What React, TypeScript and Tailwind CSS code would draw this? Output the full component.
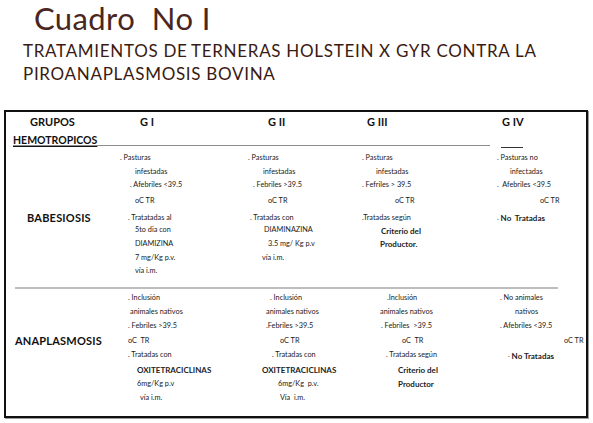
import type { ReactNode } from "react";

type Cell = { pl: number; text: ReactNode };

// one body line per row; each entry is [GI, GII, GIII, GIV]
const BABESIOSIS: { h: number; cells: (Cell | null)[] }[] = [
  { h: 13, cells: [{ pl: 0, text: ". Pasturas" }, { pl: 0, text: ". Pasturas" }, { pl: 0, text: ". Pasturas" }, { pl: 0, text: ". Pasturas no" }] },
  { h: 14, cells: [{ pl: 15, text: "infestadas" }, { pl: 15, text: "infestadas" }, { pl: 14, text: "infestadas" }, { pl: 13, text: "infectadas" }] },
  { h: 13, cells: [{ pl: 10, text: ". Afebriles <39.5" }, { pl: 5, text: ". Febriles >39.5" }, { pl: 0, text: ". Fefriles > 39.5" }, { pl: 0, text: ".  Afebriles <39.5" }] },
  { h: 18, cells: [{ pl: 15, text: "oC TR" }, { pl: 20, text: "oC TR" }, { pl: 33, text: "oC TR" }, { pl: 43, text: "oC TR" }] },
  { h: 14, cells: [{ pl: 8, text: ". Tratatadas al" }, { pl: 2, text: ". Tratadas con" }, { pl: 0, text: ".Tratadas según" }, { pl: 0, text: <>. <b className="text-[8px]">No&nbsp; Tratadas</b></> }] },
  { h: 13, cells: [{ pl: 15, text: "5to dia con" }, { pl: 16, text: "DIAMINAZINA" }, { pl: 19, text: <b className="text-[8px]">Criterio del</b> }, null] },
  { h: 14, cells: [{ pl: 15, text: "DIAMIZINA" }, { pl: 20, text: "3.5 mg/ Kg p.v" }, { pl: 18, text: <b className="text-[8px]">Productor.</b> }, null] },
  { h: 14, cells: [{ pl: 15, text: "7 mg/Kg p.v." }, { pl: 14, text: "vía i.m." }, null, null] },
  { h: 13, cells: [{ pl: 15, text: "vía i.m." }, null, null, null] },
];

const ANAPLASMOSIS: { h: number; cells: (Cell | null)[] }[] = [
  { h: 13, cells: [{ pl: 8, text: ". Inclusión" }, { pl: 22, text: ". Inclusión" }, { pl: 25, text: ".Inclusión" }, { pl: 3, text: ". No animales" }] },
  { h: 14, cells: [{ pl: 10, text: "animales nativos" }, { pl: 18, text: "animales nativos" }, { pl: 18, text: "animales nativos" }, { pl: 18, text: "nativos" }] },
  { h: 14, cells: [{ pl: 8, text: ". Febriles >39.5" }, { pl: 18, text: ".Febriles >39.5" }, { pl: 19, text: ". Febriles  >39.5" }, { pl: 3, text: ". Afebriles <39.5" }] },
  { h: 15, cells: [{ pl: 8, text: "oC  TR" }, { pl: 32, text: "oC TR" }, { pl: 40, text: "oC  TR" }, { pl: 67, text: "oC TR" }] },
  { h: 15, cells: [{ pl: 8, text: ". Tratadas con" }, { pl: 24, text: ". Tratadas con" }, { pl: 24, text: ". Tratadas según" }, { pl: 11, text: <>. <b className="text-[8px]">No Tratadas</b></> }] },
  { h: 14, cells: [{ pl: 17, text: <b className="text-[8px]">OXITETRACICLINAS</b> }, { pl: 14, text: <b className="text-[8px]">OXITETRACICLINAS</b> }, { pl: 36, text: <b className="text-[8px]">Criterio del</b> }, null] },
  { h: 14, cells: [{ pl: 17, text: "6mg/Kg p.v" }, { pl: 30, text: "6mg/Kg  p.v." }, { pl: 36, text: <b className="text-[8px]">Productor</b> }, null] },
  { h: 14, cells: [{ pl: 20, text: "vía i.m." }, { pl: 32, text: "Vía  i.m." }, null, null] },
];

const COLS = "grid grid-cols-[114px_128px_114px_135px_1fr]";

function Block({
  label,
  labelRow,
  labelPl,
  rows,
}: {
  label: string;
  labelRow: number;
  labelPl: number;
  rows: { h: number; cells: (Cell | null)[] }[];
}) {
  return (
    <div className="flex flex-col">
      {rows.map((row, i) => (
        <div key={i} className={COLS} style={{ height: row.h }}>
          <div className="flex items-center" style={{ paddingLeft: labelPl }}>
            {i === labelRow ? <span className="text-[11px] font-bold tracking-[0.2px]">{label}</span> : null}
          </div>
          {row.cells.map((c, j) => (
            <div key={j} className="flex items-center whitespace-pre text-[7.3px] text-[#222]" style={{ paddingLeft: c?.pl ?? 0 }}>
              {c ? c.text : null}
            </div>
          ))}
        </div>
      ))}
    </div>
  );
}

export default function App() {
  return (
    <div className="h-[423px] w-[593px] overflow-hidden bg-white font-['Lato',_sans-serif] text-[#111]">
      <header className="pl-[34px] pt-[0px]">
        <h1 className="text-[31px] leading-[36px] tracking-[0.4px] text-[#4a2620]">Cuadro&nbsp; No I</h1>
        <h2 className="-ml-[11px] mt-[3px] text-[17px] leading-[23px] tracking-[0.7px] text-[#3a1a12]">
          TRATAMIENTOS DE<span className="tracking-[-1px]"> </span>TERNERAS HOLSTEIN X GYR CONTRA LA
          <br />
          PIROANAPLASMOSIS BOVINA
        </h2>
      </header>

      <section className="ml-[4px] mt-[25px] h-[308px] w-[584px] border-2 border-[#111] shadow-[1px_1px_0_#9a9a9a]">
        <div className={`${COLS} h-[33px] pt-[3px] text-[11px] font-bold`}>
          <div className="flex flex-col">
            <span className="pl-[24px] leading-[13px]">GRUPOS</span>
            <span className="mt-[7px] pl-[7px] text-[10.5px] leading-[11px] underline decoration-[1px] underline-offset-[2px]">
              HEMOTROPICOS
            </span>
          </div>
          <span className="pl-[20px] leading-[13px]">G I</span>
          <span className="pl-[20px] leading-[13px]">G II</span>
          <span className="pl-[5px] leading-[13px]">G III</span>
          <span className="pl-[5px] leading-[13px]">G IV</span>
        </div>
        <div className="flex h-[4px]">
          <div className="ml-[7px] mt-[0px] h-px w-[477px] bg-[#8c8c8c]" />
          <div className="ml-[11px] mt-[2px] h-px w-[22px] bg-[#333]" />
        </div>

        <div className="pt-[3px]">
          <Block label="BABESIOSIS" labelRow={4} labelPl={21} rows={BABESIOSIS} />
        </div>

        <div className="ml-[9px] mt-[9px] h-[2px] w-[543px] bg-[#bdbdbd]" />

        <div className="pt-[3px]">
          <Block label="ANAPLASMOSIS" labelRow={3} labelPl={9} rows={ANAPLASMOSIS} />
        </div>
      </section>
    </div>
  );
}
